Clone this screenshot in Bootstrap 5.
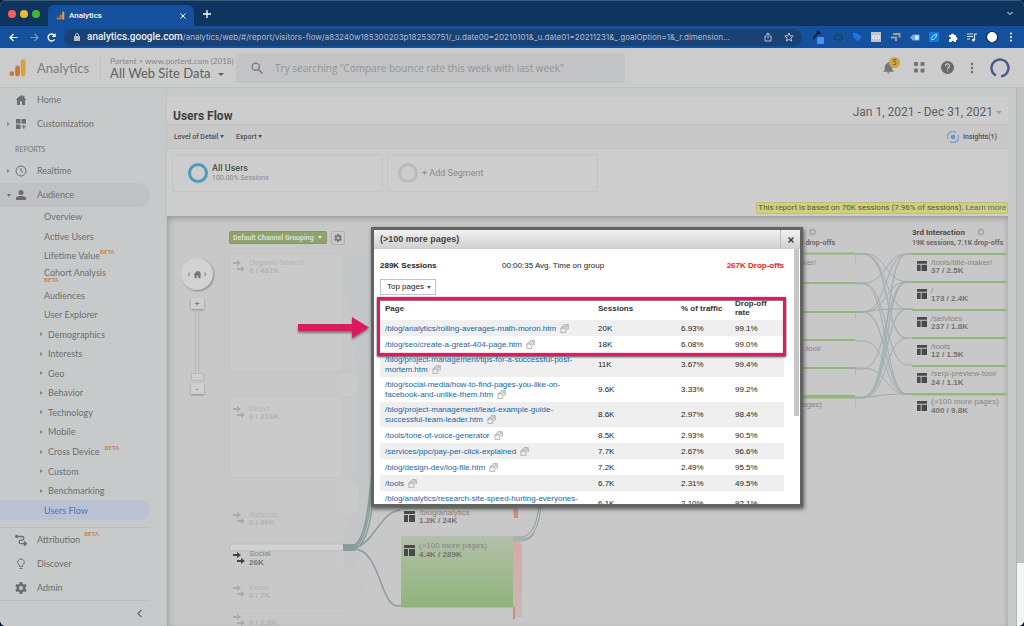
<!DOCTYPE html>
<html lang="en">
<head>
<meta charset="utf-8">
<meta name="viewport" content="width=device-width, initial-scale=1">
<title>Analytics</title>
<link href="https://cdn.jsdelivr.net/npm/bootstrap@5.3.0/dist/css/bootstrap.min.css" rel="stylesheet">
<style>
  body { background: #0a1a2c; font: 9px/12px Roboto, "Liberation Sans", sans-serif; color: #6b6d6f; }
  button, input, select { font: inherit; color: inherit; border: 0; padding: 0; background: none; }
  a { color: inherit; text-decoration: none; }
  svg { display: block; flex: none; }
  .window { border-radius: 6px; overflow: hidden; background: #c7caca; }
  .google { font-family: Lato, Roboto, sans-serif; }

  /* browser chrome */
  .tabstrip { height: 26px; background: #0e3560; border-top: 1px solid #3f5a78; color: #fff; padding: 0 11px 0 8px; }
  .dot { width: 8px; height: 8px; border-radius: 50%; }
  .tab { width: 146px; height: 21px; margin-left: 8px; border-radius: 6px 6px 0 0; background: #14509b; padding: 0 8px; font-weight: 500; font-size: 8px; }
  .toolbar { height: 22px; background: #14509b; padding: 0 9px; color: #fff; }
  .omnibox { height: 17px; border-radius: 9px; background: #1a4173; padding: 0 8px 0 9px; font: 10px/16px Roboto, sans-serif; color: #a9bdd6; min-width: 0; }
  .omnibox b { color: #e9eff7; font-weight: 500; }
  .omnibox input { min-width: 0; font: 8px/16px Inter, Roboto, sans-serif; }
  .extensions { gap: 9px; padding-left: 10px; }

  /* product header */
  .app-head { height: 40px; background: #cbcccb; border-bottom: 1px solid #bfc0c0; padding: 0 14px 0 9px; color: #7c7e80; }
  .brand { font-size: 13px; line-height: 18px; padding-right: 11px; margin-left: 3px; }
  .view { padding-left: 9px; border-left: 1px solid #bfc1c1; height: 24px; width: 136px; font-size: 8px; line-height: 10px; text-align: left; color: #858789; white-space: nowrap; }
  .view strong { display: block; font-weight: 400; font-size: 13px; line-height: 15px; color: #5f6163; }
  .search { width: 389px; height: 30px; border-radius: 3px; background: #c2c3c4; padding: 0 15px; font: 10px/14px "Open Sans", sans-serif; }
  .search input::placeholder { color: #929496; opacity: 1; }
  .bell { position: relative; }
  .bell span { position: absolute; left: 6px; top: -5px; width: 11px; height: 11px; border-radius: 50%; background: #cfa347; color: #5c4b25; font-size: 7px; line-height: 11px; text-align: center; }
  .caret { display: inline-block; border: 3px solid transparent; border-top-color: currentColor; border-bottom: 0; vertical-align: middle; }
  .caret-sm { border-width: 2px; border-bottom: 0; border-top-width: 3px; }
  .arrow-r { width: 0; border: 2px solid transparent; border-left: 3px solid #858788; border-right: 0; flex: none; }

  /* side navigation */
  .side { width: 167px; background: #c7caca; border-right: 1px solid #c1c3c3; font-size: 9px; }
  .side a { display: flex; align-items: center; color: #6c6e70; }
  .item { height: 24px; padding-left: 7px; margin-right: 16px; border-radius: 0 12px 12px 0; }
  .item .lead-in { width: 8px; }
  .item svg { width: 12px; margin-right: 10px; }
  .item.open { background: #bfc1c4; }
  .caption { padding: 8px 0 5px 15px; font-size: 7px; line-height: 10px; color: #77797b; }
  .subnav a { flex: 1 1 0; padding-left: 44px; margin-right: 16px; border-radius: 0 10px 10px 0; line-height: 9px; }
  .subnav .more { padding-left: 40px; gap: 5px; }
  .subnav .current { background: #b9c1d2; color: #4a75be; }
  .beta { font-size: 6px; line-height: 6px; color: #d07c55; font-weight: 700; align-self: flex-start; margin-top: 3px; }
  .side hr { margin: 7px 16px 0 0; border-color: #8b8d8d; opacity: .2; }

  /* report */
  .report { padding-top: 9px; min-width: 0; }
  .title-row { height: 27px; background: #cdcdcd; padding: 4px 6px 0; }
  .title-row h1 { font-size: 12px; line-height: 22px; font-weight: 700; margin: 4px 0 0; color: #3f4041; }
  .range { font-size: 12px; line-height: 22px; color: #5a5f66; }
  .actions { height: 25px; background: #c8c8c8; border-top: 1px solid #c1c1c1; border-bottom: 1px solid #c1c1c1; padding: 0 7px; font-size: 7px; font-weight: 500; color: #4d4e50; }
  .segments { background: #cdcdcd; height: 67px; padding: 5px 5px 0; position: relative; }
  .segment { width: 211px; height: 38px; border: 1px solid #c4c4c4; border-radius: 2px; padding: 0 15px; text-align: left; line-height: 9px; font-size: 7px; color: #8a8a8a; }
  .segment strong { font-weight: 500; font-size: 9px; color: #505152; }
  .ring { width: 20px; height: 20px; border: 3px solid #4c9ac0; border-radius: 50%; }
  .ring.empty { border-color: #bbb; }
  .sampled { position: absolute; right: 0; bottom: 2px; background: #cfcf7e; border: 1px solid #c0c069; border-radius: 2px; padding: 0 1px; font-size: 8px; line-height: 10px; color: #57573d; white-space: nowrap; }
  .sampled a { color: #3f7189; }
  .canvas { position: relative; background: #c8c8c8; overflow: hidden; box-shadow: inset 2px 3px 6px -1px #999, inset -3px 0 6px -3px #aaa; }
  .canvas > svg { position: absolute; inset: 0; width: 100%; height: 100%; }
  .flow-label { font: 8px/10px "Liberation Sans", sans-serif; fill: #858585; }
  .flow-label .n { font-weight: 700; fill: #737373; }
  .faint { fill: #b4b4b4; } .faint .n { fill: #b3b3b3; }

  /* controls that float over the diagram */
  .grouping { position: absolute; left: 62px; top: 15px; }
  .grouping select { appearance: none; width: 98px; height: 13px; background: #8fa26c; color: #d9dfcb; border: 1px solid #84976a; border-radius: 2px; font-size: 7px; font-weight: 700; padding-left: 3px; }
  .grouping label { position: relative; }
  .grouping .caret { position: absolute; right: 5px; top: 5px; color: #e5e9dc; }
  .cog { width: 14px; height: 14px; border: 1px solid #b1b1b1; border-radius: 2px; color: #777; }
  .pan { position: absolute; left: 13px; top: 42px; width: 34px; color: #777; }
  .home { width: 32px; height: 32px; border-radius: 50%; background: #d2d2d2; box-shadow: 1px 1px 2px #888; }
  .step { width: 13px; height: 11px; background: #cfcfcf; box-shadow: 0 1px 2px #888; line-height: 10px; }
  .rail { width: 4px; height: 64px; border: 1px solid #b5b5b5; border-width: 0 1px; }
  .thumb { width: 13px; height: 8px; border: 1px solid #b9b9b9; background: #cdcdcd; margin-bottom: 2px; }

  /* page group dialog */
  .dialog { position: absolute; left: 204px; top: 11px; width: 432px; height: 280px; border: 3px solid #636363; background: #fff; box-shadow: 1px 2px 4px #555; font: 8px/10px "Liberation Sans", sans-serif; color: #222; }
  .dialog header { height: 19px; background: linear-gradient(#f2f2f2, #cfcfcf); padding-left: 6px; }
  .dialog h2 { font-size: 9px; line-height: 18px; font-weight: 700; margin: 0; color: #444; }
  .dialog header button { width: 20px; border-left: 1px solid #bbb; }
  .scroll { height: 255px; overflow: hidden; padding: 12px 16px 0 6px; position: relative; }
  .scroll::after { content: ""; position: absolute; right: 1px; top: 0; width: 5px; height: 167px; background: #c6c6c6; }
  .total { width: 122px; }
  .pick { position: relative; margin: 8px 0 3px; display: block; width: 56px; height: 16px; }
  .pick select { appearance: none; width: 56px; height: 16px; border: 1px solid #c4c4c4; padding-left: 6px; display: block; }
  .pick .caret { position: absolute; right: 5px; top: 7px; color: #2d5a8e; }
  .pages { width: 100%; table-layout: fixed; border-collapse: collapse; }
  .pages td, .pages th { height: 16px; padding: 3px 0 2px 5px; vertical-align: middle; line-height: 10px; }
  .pages th { color: #333; height: 22px; line-height: 9px; padding: 0 0 2px 5px; }
  .pages tbody tr:nth-child(odd) { background: #efefef; }
  .pages a { color: #1565a8; }
  .pages svg { display: inline-block; margin: -4px 0 -2px 2px; vertical-align: 0; }
  .marker { position: absolute; left: 210px; top: 81px; width: 409px; height: 59px; border: 3px solid #dc1c60; box-shadow: 0 1px 2px #444, inset 0 1px 1px #777; }
  .canvas > .pointer { left: 130px; top: 100px; width: 73px; height: 24px; filter: drop-shadow(0 2px 1px #777); }
  .track { width: 8px; background: #c1c1c1; border-left: 1px solid #b3b3b3; }
  .track div { height: 63px; background: #f4f4f4; }
</style>
</head>
<body>
<svg width="0" height="0" class="position-absolute" aria-hidden="true">
  <symbol id="logo" viewBox="0 0 18 20"><circle cx="3" cy="16.500" r="2.600" fill="#c97839"/><rect x="6.500" y="8" width="5" height="11.500" rx="2.500" fill="#c97839"/><rect x="12.500" y="1" width="5" height="18.500" rx="2.500" fill="#d6a143"/></symbol>
  <symbol id="open" viewBox="0 0 10 10"><path d="M4 2.500H3L1 4.500V9.300h5.500V6.500M1 4.800h2.200V2.700M4.500.7h4.800v4.800H4.500zM5.500 4.500 8 2M6.300 2H8v1.700" fill="none" stroke="#999" stroke-width=".8"/></symbol>
  <symbol id="page" viewBox="0 0 11 11"><path fill="#4a4a4a" d="M0 0h11v3H0zM0 4h4v7H0zM5 4h6v7H5z"/></symbol>
  <symbol id="src" viewBox="0 0 12 12"><path fill="currentColor" d="M0 2h4V0l4 3-4 3V4H0zM4 8h4V6l4 3-4 3v-2H4z"/></symbol>
  <symbol id="house" viewBox="0 0 12 12"><path fill="currentColor" d="M6 1 0.500 6H2v5h3V7.500h2V11h3V6h1.500L9.500 4V1.500H8v1.200z"/></symbol>
  <symbol id="gear" viewBox="0 0 12 12"><path fill="currentColor" fill-rule="evenodd" d="M4.800 0h2.400l.4 1.700 1.200.7 1.700-.5 1.200 2.100L10.400 5.200v1.600l1.300 1.200-1.200 2.100-1.700-.5-1.200.7L7.200 12H4.800l-.4-1.700-1.200-.7-1.700.5L.3 8l1.300-1.200V5.200L.3 4l1.200-2.100 1.700.5 1.200-.7zM6 4a2 2 0 1 0 0 4 2 2 0 0 0 0-4z"/></symbol>
</svg>

<div class="window vh-100 d-flex flex-column">
  <div class="tabstrip d-flex align-items-center">
    <div class="d-flex gap-1"><i class="dot" style="background:#fb5e55"></i><i class="dot" style="background:#e8bd30"></i><i class="dot" style="background:#41b928"></i></div>
    <div class="tab d-flex align-items-center align-self-end">
      <svg width="9" height="9"><use href="#logo"/></svg><span class="ms-1 flex-grow-1">Analytics</span>
      <button aria-label="Close tab"><svg width="6" height="6" viewBox="0 0 6 6"><path d="m.5.5 5 5m0-5-5 5" stroke="#fff"/></svg></button>
    </div>
    <button class="ms-2" aria-label="New tab"><svg width="10" height="8" viewBox="0 0 10 8"><path d="M5 0v8M1 4h8" stroke="#fff" stroke-width="1.300"/></svg></button>
    <button class="ms-auto" aria-label="Tab search"><svg width="6" height="5" viewBox="0 0 6 5"><path d="m.5 1 2.500 2.500L5.500 1" fill="none" stroke="#fff"/></svg></button>
  </div>
  <div class="toolbar d-flex align-items-center">
    <button aria-label="Back"><svg width="9" height="9" viewBox="0 0 9 9"><path d="M8.500 4.500H1M4.500 1 1 4.500 4.500 8" fill="none" stroke="#fff" stroke-width="1.200"/></svg></button>
    <button class="ms-2 ps-1" aria-label="Forward"><svg width="9" height="9" viewBox="0 0 9 9"><path d="M.5 4.500H8M4.500 1 8 4.500 4.500 8" fill="none" stroke="#7799c6" stroke-width="1.200"/></svg></button>
    <button class="mx-2" aria-label="Reload"><svg width="9" height="9" viewBox="0 0 9 9"><path d="M7.600 6.200A3.500 3.500 0 1 1 7 2l.8.900" fill="none" stroke="#fff" stroke-width="1.300"/><path d="M8.700 0v4H4.700z" fill="#fff"/></svg></button>
    <div class="omnibox d-flex align-items-center flex-grow-1">
      <svg class="me-1" width="10" height="8" viewBox="0 0 10 8"><path fill="#b3bccb" d="M1 3h6v5H1z"/><path d="M2.500 3V2a1.500 1.500 0 0 1 3 0v1" fill="none" stroke="#b3bccb"/></svg>
      <b>analytics.google.com</b><input class="flex-grow-1" aria-label="Address" value="/analytics/web/#/report/visitors-flow/a83240w185300203p182530751/_u.date00=20210101&amp;_u.date01=20211231&amp;_.goalOption=1&amp;_r.dimension...">
      <svg class="mx-2" width="8" height="10" viewBox="0 0 8 10"><path d="M2.500 4H1v5h6V4H5.500M4 6.500V1M2.200 2.700 4 .9l1.800 1.800" fill="none" stroke="#c6d2e2" stroke-width=".9"/></svg>
      <svg class="ms-1" width="10" height="10" viewBox="0 0 10 10"><path d="m5 1 1.200 2.800 3 .2-2.300 2 .7 3L5 7.400 2.400 9l.7-3L.8 4l3-.2z" fill="none" stroke="#c6d2e2" stroke-width=".9"/></svg>
    </div>
    <div class="extensions d-flex align-items-center">
      <svg width="12" height="14" viewBox="0 0 12 14"><path d="m1 9 5-6" stroke="#0a1a30" stroke-width="1.500"/><path d="m5 1 3 3" stroke="#0a1a30" stroke-width="2"/><rect x="5" y="7" width="7" height="7" rx="1" fill="#4c8df5"/></svg>
      <svg width="11" height="9" viewBox="0 0 11 9"><path d="M2 2h7v5H2z" fill="none" stroke="#1c3c50"/><path d="M0 2V0h2M9 0h2v2M0 7v2h2M11 7v2H9" fill="none" stroke="#2b7a4e"/></svg>
      <svg width="9" height="10" viewBox="0 0 9 10"><path d="M0 1h4l5 4-4 4.500L0 5z" fill="#1f6fe5"/></svg>
      <svg width="10" height="10" viewBox="0 0 10 10"><rect width="10" height="10" fill="#c1c4ca"/><path d="M3 3 1.500 5 3 7M7 3l1.500 2L7 7M5.500 3l-1 4" fill="none" stroke="#fff"/></svg>
      <svg width="11" height="10" viewBox="0 0 11 10"><path d="M3 2h6.500v3.500M1 5.500h5V9" fill="none" stroke="#9aa1ab" stroke-width="2"/></svg>
      <svg width="10" height="9" viewBox="0 0 10 9"><path d="m0 4.500 3-3h6.500v6H3z" fill="#70a6f5"/><path d="M5 2.500h3.500v4H5z" fill="#e8f0fd"/></svg>
      <svg width="10" height="10" viewBox="0 0 10 10"><rect width="10" height="10" rx="1" fill="#0d7de6"/><path d="M2 6.500 5 3l2.700-.7L7 5 4 8z" fill="none" stroke="#d8ebfd" stroke-width=".9"/></svg>
      <svg width="10" height="10" viewBox="0 0 10 10"><path d="M1 3h2a1.500 1.500 0 1 1 3 0h2v2a1.500 1.500 0 1 1 0 3v2H6a1.200 1.200 0 1 0-2.500 0H1V7a1.200 1.200 0 1 0 0-2z" fill="#fff"/></svg>
      <svg width="10" height="9" viewBox="0 0 10 9"><path d="M0 1h6M0 3.500h6M0 6h3M7.500 7V1H10" fill="none" stroke="#dbe5f2" stroke-width="1.200"/><circle cx="6.300" cy="7" r="1.500" fill="#dbe5f2"/></svg>
      <svg width="12" height="12" viewBox="0 0 12 12"><circle cx="6" cy="6" r="6" fill="#0d2750"/><path d="M3 10a5 5 0 1 1 4.500.8L6 11.500z" fill="#fff"/></svg>
      <svg width="8" height="10" viewBox="0 0 8 10" fill="#fff"><circle cx="4" cy="1.500" r="1"/><circle cx="4" cy="5" r="1"/><circle cx="4" cy="8.500" r="1"/></svg>
    </div>
  </div>

  <header class="app-head google d-flex align-items-center">
    <svg class="me-2" width="17" height="19"><use href="#logo"/></svg>
    <a class="brand" href="#">Analytics</a>
    <button class="view">Portent &gt; www.portent.com (2018)<strong>All Web Site Data <i class="caret ms-1"></i></strong></button>
    <label class="search d-flex align-items-center">
      <svg class="me-2" width="12" height="12" viewBox="0 0 12 12"><path d="m7.500 7.500 4 4" stroke="#77797b" stroke-width="1.500"/><circle cx="4.700" cy="4.700" r="3.600" fill="none" stroke="#77797b" stroke-width="1.400"/></svg>
      <input class="flex-grow-1 ms-1" type="search" aria-label="Search" placeholder="Try searching “Compare bounce rate this week with last week”">
    </label>
    <div class="ms-auto d-flex align-items-center gap-3">
      <button class="bell" aria-label="Notifications"><svg width="11" height="12" viewBox="0 0 11 12"><path d="M5.500 0 7 1.500C9 2.200 9.300 4 9.300 8L11 9.700H0L1.700 8c0-4 .3-5.800 2.300-6.500zM4 10.500h3L5.500 12z" fill="#737577"/></svg><span>5</span></button>
      <button class="ms-1" aria-label="Apps"><svg width="11" height="11" viewBox="0 0 11 11" fill="#737577"><rect width="4" height="4" rx="1"/><rect x="6.500" width="4" height="4" rx="1"/><rect y="6.500" width="4" height="4" rx="1"/><rect x="6.500" y="6.500" width="4" height="4" rx="1"/></svg></button>
      <button aria-label="Help"><svg width="13" height="13" viewBox="0 0 13 13"><circle cx="6.500" cy="6.500" r="6.500" fill="#68696b"/><path d="M4.500 5a2 2 0 1 1 3 1.600c-.8.500-1 .8-1 1.700M6.500 9.300v1.300" fill="none" stroke="#cbcccb" stroke-width="1.200"/></svg></button>
      <button aria-label="More"><svg width="4" height="12" viewBox="0 0 4 12" fill="#68696b"><circle cx="2" cy="2" r="1.200"/><circle cx="2" cy="6" r="1.200"/><circle cx="2" cy="10" r="1.200"/></svg></button>
      <button aria-label="Account"><svg width="20" height="20" viewBox="0 0 20 20"><path d="M6 17.500A8.500 8.500 0 1 1 11 18.400" fill="none" stroke="#48568b" stroke-width="2.400"/></svg></button>
    </div>
  </header>

  <div class="d-flex flex-grow-1" style="min-height:0">
    <nav class="side google d-flex flex-column flex-shrink-0">
      <a class="item" href="#"><span class="lead-in"></span><svg height="12"><use href="#house"/></svg>Home</a>
      <a class="item" href="#"><span class="lead-in"><i class="arrow-r d-block"></i></span><svg height="12" viewBox="0 0 12 12" fill="currentColor"><path d="M1 1h4.500v4.500H1zM6.500 1H11v4.500H6.500zM1 6.500h4.500V11H1zM8.300 6.500h1v1.800H11v1H9.300V11h-1V9.300H6.500v-1h1.800z"/></svg>Customization</a>
      <div class="caption">REPORTS</div>
      <a class="item" href="#"><span class="lead-in"><i class="arrow-r d-block"></i></span><svg height="12" viewBox="0 0 12 12" fill="none" stroke="currentColor"><circle cx="6" cy="6" r="5"/><path d="M6 3v3l2 1.500"/></svg>Realtime</a>
      <a class="item open" href="#"><span class="lead-in"><i class="caret caret-sm d-block" style="width:0"></i></span><svg height="12" viewBox="0 0 12 12" fill="currentColor"><circle cx="6" cy="3.500" r="2.500"/><path d="M1 11V9.500C1 7.500 4 7 6 7s5 .5 5 2.500V11z"/></svg>Audience</a>
      <div class="subnav d-flex flex-column flex-grow-1">
        <a href="#">Overview</a><a href="#">Active Users</a>
        <a href="#">Lifetime Value<span class="beta">BETA</span></a>
        <a href="#"><span>Cohort Analysis<span class="beta d-block mt-0">BETA</span></span></a>
        <a href="#">Audiences</a><a href="#">User Explorer</a>
        <a class="more" href="#"><i class="arrow-r"></i>Demographics</a><a class="more" href="#"><i class="arrow-r"></i>Interests</a>
        <a class="more" href="#"><i class="arrow-r"></i>Geo</a><a class="more" href="#"><i class="arrow-r"></i>Behavior</a>
        <a class="more" href="#"><i class="arrow-r"></i>Technology</a><a class="more" href="#"><i class="arrow-r"></i>Mobile</a>
        <a class="more" href="#"><i class="arrow-r"></i><span>Cross Device</span><span class="beta">BETA</span></a><a class="more" href="#"><i class="arrow-r"></i>Custom</a>
        <a class="more" href="#"><i class="arrow-r"></i>Benchmarking</a><a class="current" href="#">Users Flow</a>
      </div>
      <hr>
      <a class="item" href="#"><span class="lead-in"></span><svg height="12" viewBox="0 0 12 12" fill="none" stroke="currentColor" stroke-width="1.300"><path d="M2 2.500h5a1.800 1.800 0 0 1 0 3.600H6A1.800 1.800 0 0 0 6 9.700h4"/><circle cx="1.700" cy="2.500" r="1" fill="currentColor"/><path d="m9.500 8 2 1.700-2 1.700z" fill="currentColor"/></svg>Attribution<span class="beta ms-1">BETA</span></a>
      <a class="item" href="#"><span class="lead-in"></span><svg height="12" viewBox="0 0 12 12" fill="none" stroke="currentColor"><path d="M4.500 8.500V7.200a3.300 3.300 0 1 1 3 0v1.300zM4.500 10.500h3"/></svg>Discover</a>
      <a class="item" href="#"><span class="lead-in"></span><svg height="12"><use href="#gear"/></svg>Admin</a>
      <hr class="mt-0">
      <button class="align-self-end py-2 me-4" aria-label="Collapse"><svg width="5" height="9" viewBox="0 0 5 9"><path d="M4.500 1 1 4.500 4.500 8" fill="none" stroke="#68696b" stroke-width="1.200"/></svg></button>
    </nav>

    <main class="report flex-grow-1 d-flex flex-column me-2">
      <div class="title-row d-flex justify-content-between">
        <h1>Users Flow</h1>
        <button class="range align-self-start">Jan 1, 2021 - Dec 31, 2021 <i class="caret" style="color:#999"></i></button>
      </div>
      <div class="actions d-flex align-items-center gap-2">
        <button>Level of Detail <i class="caret caret-sm"></i></button>
        <button class="ms-1">Export <i class="caret caret-sm"></i></button>
        <button class="ms-auto me-1 d-flex align-items-center gap-1"><svg width="12" height="12" viewBox="0 0 12 12"><circle cx="6" cy="6" r="2.300" fill="#6f8fcb"/><path d="M1 8a5.300 5.300 0 0 1 8-6.500M11 4a5.300 5.300 0 0 1-8 6.500" fill="none" stroke="#809dd2" stroke-width="1.400"/></svg>Insights(1)</button>
      </div>
      <div class="segments d-flex gap-1">
        <button class="segment d-flex align-items-center"><span class="ring me-1"></span><span><strong>All Users</strong><br>100.00% Sessions</span></button>
        <button class="segment d-flex align-items-center" style="padding-left:10px"><span class="ring empty me-1"></span><span style="font-size:9px">+ Add Segment</span></button>
        <div class="sampled">This report is based on 70K sessions (7.96% of sessions). <a href="#">Learn more</a></div>
      </div>
      <section class="canvas flex-grow-1">
        <svg aria-label="Users flow diagram">
          <defs>
            <linearGradient id="green" x2="0" y2="1"><stop stop-color="#b2c0aa"/><stop offset="1" stop-color="#8fb479"/></linearGradient>
            <linearGradient id="drop" x2="0" y2="1"><stop stop-color="#d8a9a3"/><stop offset="1" stop-color="#c9b8b6"/></linearGradient>
          </defs>
          <g transform="translate(-167 -216)">
            <!-- faded traffic leaving each source -->
            <g fill="#c1c6c6">
              <path d="M343 254h16q12 0 16 14v240q-10 40-20 60h-12v-30q15-40 12-160-2-80-12-84z" opacity=".6"/>
            </g>
            <g fill="#cacaca" stroke="#c4c4c4">
              <rect x="229.500" y="253.500" width="113" height="118" rx="2"/><path d="M343 372.500h4q12 0 12 12t-12 13h-4"/>
              <rect x="229.500" y="396.500" width="113" height="81" rx="2"/><path d="M343 477.500h5q12 2 12 20t-12 19h-5"/>
              <path d="M229 517.500h114q16 2 16 12t-16 13M229 579.500h114q14 0 16-12M229 608.500h114q16 0 20-24" fill="none"/>
            </g>
            <rect x="229.500" y="544" width="114" height="7" rx="2" fill="#d2d2d2" stroke="#bcbcbc"/>
            <!-- social traffic -->
            <g fill="none" stroke="#899c9c">
              <path d="M343 547.500h12" stroke-width="7"/>
              <path d="M354 545c14-6 16-60 20-90M354 547c16-6 18-60 21-100M354 549c16-4 20-50 21-80M354 548c20-4 26-36 46-38M354 549c26 0 26 57 44 57h3" stroke-width="1.500"/>
              <path d="M513 537h10q14-4 16-34M513 539h12q14-4 16-36M513 541h9q10-2 12-8"/>
            </g>
            <rect x="401" y="536" width="112.500" height="71.500" fill="url(#green)"/>
            <path d="M401 506h112v3H401z" fill="#90b576"/>
            <path d="M513 541h5q4 1 4 8v68h-9z" fill="url(#drop)"/><path d="M513 607h2v12h-2zM513 508h5v10h-4z" fill="#cc8b86"/>
            <g class="flow-label">
              <use href="#page" x="404" y="511" width="11" height="11"/><use href="#page" x="404" y="545" width="11" height="11"/>
              <text x="419" y="515">/blog/analytics</text><text class="n" x="419" y="523">1.2K / 24K</text>
              <text x="419" y="548">(&gt;100 more pages)</text><text class="n" x="419" y="557">4.4K / 289K</text>
            </g>
            <!-- traffic sources -->
            <g color="#aaa">
              <use href="#src" x="233" y="260" width="12" height="12"/><use href="#src" x="233" y="406" width="12" height="12"/><use href="#src" x="233" y="512" width="12" height="12"/><use href="#src" x="233" y="585" width="12" height="12"/><use href="#src" x="233" y="614" width="12" height="12"/>
              <use href="#src" x="233" y="552" width="12" height="12" color="#444"/>
            </g>
            <g class="flow-label faint">
              <text x="249" y="265">Organic Search</text><text class="n" x="249" y="273">0 / 481K</text>
              <text x="249" y="411">Direct</text><text class="n" x="249" y="419">0 / 316K</text>
              <text x="249" y="517">Referral</text><text class="n" x="249" y="525">0 / 46K</text>
              <text x="249" y="590">Email</text><text class="n" x="249" y="598">0 / 7K</text>
              <text x="249" y="617">...</text><text class="n" x="249" y="625">0 / 2.8K</text>
            </g>
            <g class="flow-label"><text x="249" y="556">Social</text><text class="n" x="249" y="565">26K</text></g>
            <!-- second to third interaction -->
            <g fill="none" stroke="#9daeae">
              <path d="M855 253.500h8c24 0 22 28 44 28h6M855 254h8c24 0 22 55 44 55h6M855 283h8c24 0 22-29 44-29h6M855 283h8c24 0 22 82 44 82h6M855 284h8c24 0 22 110 44 110h6M855 312h8c24 0 22-58 44-58h6M855 312h8c24 0 22-30 44-30h6M855 312h8c20-3 26-3 44-3h6M855 341h8c24 0 22 53 44 53h6M855 369h8c24 0 22-87 44-87h6M855 368h8c24 0 22 26 44 26h6M855 398h8c24 0 22-60 44-60h6M855 398h8c20-3 26-4 44-4h6"/>
              <path d="M855 397h8c28 0 20-143 44-143h6M855 397h8c28 0 20-115 44-115h6M855 397h8c26 0 20-88 44-88h6M855 312h8c24 0 22 82 44 82h6M855 254h8c28 0 20 84 44 84" stroke-width="1.500" opacity=".8"/>
            </g>
            <g fill="#93b87b">
              <path d="M803 252.500h52v2h-52zM803 282h52v2h-52zM803 311h52v2h-52zM803 339h52v2h-52zM803 367h52v2h-52zM803 395h52v3.500h-52zM912 253h95v2h-95zM912 281h95v2h-95zM912 309h95v2h-95zM912 337h95v2h-95zM912 365h95v2h-95zM912 393h95v2.500h-95z"/>
            </g>
            <path d="M855.500 254v9M855.500 313v5M855.500 369v6M855.500 398v9" stroke="#cda5a0" stroke-width=".7"/>
            <g>
              <use href="#page" x="916.500" y="261" width="11" height="10"/><use href="#page" x="916.500" y="289" width="11" height="10"/><use href="#page" x="916.500" y="317" width="11" height="10"/><use href="#page" x="916.500" y="345" width="11" height="10"/><use href="#page" x="916.500" y="373" width="11" height="10"/><use href="#page" x="916.500" y="401" width="11" height="10"/>
            </g>
            <g class="flow-label">
              <text x="931" y="265">/tools/title-maker/</text><text class="n" x="931" y="273">37 / 2.5K</text>
              <text x="931" y="293">/</text><text class="n" x="931" y="301">173 / 2.4K</text>
              <text x="931" y="321">/services</text><text class="n" x="931" y="329">237 / 1.8K</text>
              <text x="931" y="349">/tools</text><text class="n" x="931" y="357">12 / 1.5K</text>
              <text x="931" y="376">/serp-preview-tool/</text><text class="n" x="931" y="385">24 / 1.1K</text>
              <text x="931" y="404">(&gt;100 more pages)</text><text class="n" x="931" y="413">400 / 9.8K</text>
              <text x="816" y="265" text-anchor="end">maker/</text><text x="821" y="351" text-anchor="end">w-tool/</text><text x="822" y="407" text-anchor="end">pages)</text>
            </g>
            <g font-size="7" font-weight="700" fill="#6a6a6a">
              <text x="912" y="235" font-size="8" fill="#4b4b4b">3rd Interaction</text><text x="912" y="245">19K sessions, 7.1K drop-offs</text>
              <text x="835" y="245" text-anchor="end">drop-offs</text>
            </g>
            <g fill="none" stroke="#aaa" stroke-width="2"><circle cx="812.500" cy="232" r="2.500"/><circle cx="981" cy="232" r="2.500"/></g>
          </g>
        </svg>

        <div class="grouping d-flex gap-1">
          <label><select aria-label="Dimension"><option>Default Channel Grouping</option></select><i class="caret caret-sm"></i></label>
          <button class="cog d-flex align-items-center justify-content-center" aria-label="Settings"><svg width="8" height="8"><use href="#gear"/></svg></button>
        </div>
        <div class="pan d-flex flex-column align-items-center">
          <button class="home d-flex align-items-center justify-content-center mb-2" aria-label="Reset view"><b>‹&nbsp;</b><svg width="9" height="9"><use href="#house"/></svg><b>&nbsp;›</b></button>
          <button class="step">+</button><div class="rail"></div><div class="thumb"></div><button class="step">-</button>
        </div>

        <div class="dialog" role="dialog" aria-labelledby="group-title">
          <header class="d-flex justify-content-between"><h2 id="group-title">(&gt;100 more pages)</h2><button class="d-flex align-items-center justify-content-center" aria-label="Close"><svg width="6" height="6" viewBox="0 0 6 6"><path d="m.5.5 5 5m0-5-5 5" stroke="#444" stroke-width="1.500"/></svg></button></header>
          <div class="scroll">
            <div class="d-flex"><b class="total">289K Sessions</b><span>00:00:35 Avg. Time on group</span><b class="ms-auto" style="color:#f01818">267K Drop-offs</b></div>
            <label class="pick"><select aria-label="Pages shown"><option>Top pages</option></select><i class="caret caret-sm"></i></label>
            <table class="pages">
              <colgroup><col><col style="width:83px"><col style="width:54px"><col style="width:54px"></colgroup>
              <thead><tr><th>Page</th><th>Sessions</th><th>% of traffic</th><th>Drop-off<br>rate</th></tr></thead>
              <tbody>
                <tr><td><a href="#">/blog/analytics/rolling-averages-math-moron.htm</a> <svg width="9" height="9"><use href="#open"/></svg></td><td>20K</td><td>6.93%</td><td>99.1%</td></tr>
                <tr><td><a href="#">/blog/seo/create-a-great-404-page.htm</a> <svg width="9" height="9"><use href="#open"/></svg></td><td>18K</td><td>6.08%</td><td>99.0%</td></tr>
                <tr><td><a href="#">/blog/project-management/tips-for-a-successful-post-<br>mortem.htm</a> <svg width="9" height="9"><use href="#open"/></svg></td><td>11K</td><td>3.67%</td><td>99.4%</td></tr>
                <tr><td><a href="#">/blog/social-media/how-to-find-pages-you-like-on-<br>facebook-and-unlike-them.htm</a> <svg width="9" height="9"><use href="#open"/></svg></td><td>9.6K</td><td>3.33%</td><td>99.2%</td></tr>
                <tr><td><a href="#">/blog/project-management/lead-example-guide-<br>successful-team-leader.htm</a> <svg width="9" height="9"><use href="#open"/></svg></td><td>8.6K</td><td>2.97%</td><td>98.4%</td></tr>
                <tr><td><a href="#">/tools/tone-of-voice-generator</a> <svg width="9" height="9"><use href="#open"/></svg></td><td>8.5K</td><td>2.93%</td><td>90.5%</td></tr>
                <tr><td><a href="#">/services/ppc/pay-per-click-explained</a> <svg width="9" height="9"><use href="#open"/></svg></td><td>7.7K</td><td>2.67%</td><td>96.6%</td></tr>
                <tr><td><a href="#">/blog/design-dev/log-file.htm</a> <svg width="9" height="9"><use href="#open"/></svg></td><td>7.2K</td><td>2.49%</td><td>95.5%</td></tr>
                <tr><td><a href="#">/tools</a> <svg width="9" height="9"><use href="#open"/></svg></td><td>6.7K</td><td>2.31%</td><td>49.5%</td></tr>
                <tr><td><a href="#">/blog/analytics/research-site-speed-hurting-everyones-</a><br><svg width="9" height="9"><use href="#open"/></svg></td><td>6.1K</td><td>2.10%</td><td>92.1%</td></tr>
              </tbody>
            </table>
          </div>
        </div>
        <div class="marker"></div>
        <svg class="pointer" viewBox="0 0 73 24"><path d="M1 8h54V1l17 10.500L55 22v-7H1z" fill="#e0185e"/></svg>
      </section>
    </main>
    <div class="track d-flex flex-column justify-content-end"><div></div></div>
  </div>
</div>
<script src="https://cdn.jsdelivr.net/npm/bootstrap@5.3.0/dist/js/bootstrap.bundle.min.js"></script>
</body>
</html>
